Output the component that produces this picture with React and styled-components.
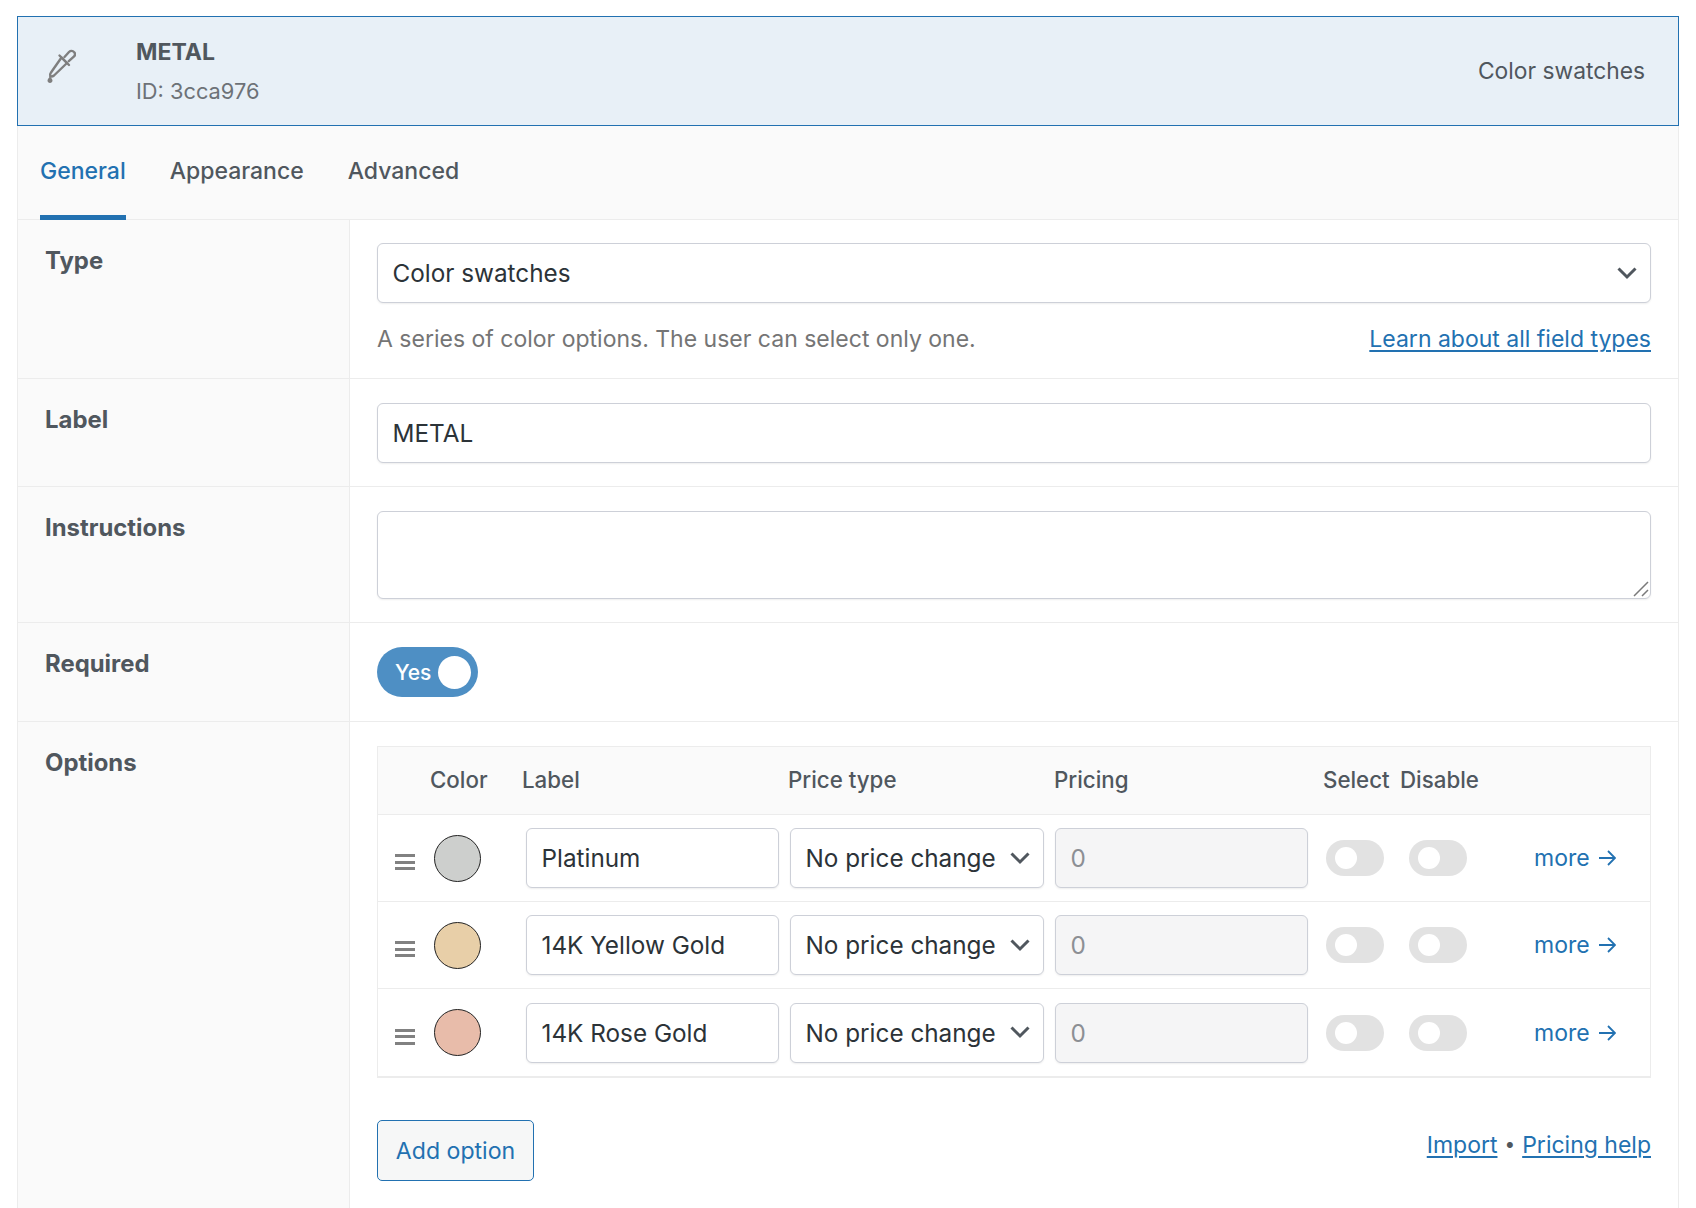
import React from 'react'
import styled, { createGlobalStyle } from 'styled-components'

const GlobalStyle = createGlobalStyle`
    html, body {
        margin: 0;
        padding: 0;
        background: #fff;
    }
    body {
        font-family: Inter, "Liberation Sans", sans-serif;
        font-size: 23px;
        color: #50575e;
    }
    * {
        box-sizing: border-box;
    }
`

const Page = styled.div`
    height: 1208px;
    overflow: hidden;
    padding: 16px 17px 0;
`

const Panel = styled.div`
    width: 1662px;
    height: 1300px;
    border-left: 1px solid #ececec;
    border-right: 1px solid #ececec;
`

const Header = styled.header`
    height: 110px;
    margin: 0 -1px;
    padding: 0 33px 0 26px;
    display: flex;
    align-items: center;
    background: #e8f0f7;
    border: 1px solid #2271b1;
`

const DropperIcon = styled.svg`
    margin-top: -11px;
`

const HeaderTitles = styled.div`
    margin-left: 60px;
    flex: 1;
    display: flex;
    flex-direction: column;
    gap: 14px;
`

const FieldName = styled.div`
    font-weight: 700;
    font-size: 23px;
    line-height: 26px;
    color: #50575e;
`

const FieldId = styled.div`
    font-size: 21.8px;
    line-height: 24px;
    color: #6d7277;
`

const FieldType = styled.div`
    font-size: 22.8px;
    line-height: 28px;
    color: #50575e;
`

const Tabs = styled.nav`
    height: 94px;
    padding-left: 22px;
    display: flex;
    gap: 44px;
    background: #fafafa;
    border-bottom: 1px solid #ececec;
`

const Tab = styled.a`
    height: 94px;
    padding-top: 31px;
    font-size: 23px;
    line-height: 28px;
    color: ${(p) => (p.$active ? '#2271b1' : '#50575e')};
    border-bottom: 5px solid ${(p) => (p.$active ? '#2271b1' : 'transparent')};
    font-weight: 500;
`

const Row = styled.section`
    display: flex;
    border-bottom: 1px solid #ececec;
`

const RowLabel = styled.div`
    width: 332px;
    flex: none;
    padding: 27px 0 0 27px;
    font-size: 23.9px;
    font-weight: 700;
    line-height: 28px;
    background: #fafafa;
    border-right: 1px solid #ececec;
`

const RowBody = styled.div`
    flex: 1;
    padding: ${(p) => p.$top || 24}px 27px 23px;
`

const Control = `
    border: 1px solid #cdd0d8;
    border-radius: 6px;
    box-shadow: 0 1px 2px rgba(0, 0, 0, 0.07);
    background: #fff;
    color: #2c3338;
    font-family: inherit;
    font-size: 24.3px;
`

const SelectBox = styled.div`
    ${Control}
    height: 60px;
    padding: 0 13px 0 14.5px;
    display: flex;
    align-items: center;
    justify-content: space-between;
`

const TextInput = styled.input`
    ${Control}
    display: block;
    width: 100%;
    height: 60px;
    padding: 0 14.5px;
    outline: none;
    &:disabled {
        background: #f5f5f6;
        color: #8c8f94;
        -webkit-text-fill-color: #8c8f94;
        opacity: 1;
    }
`

const AreaWrap = styled.div`
    position: relative;
`

const TextArea = styled.textarea`
    ${Control}
    display: block;
    width: 100%;
    height: 88px;
    padding: 10px 15px;
    outline: none;
    resize: none;
`

const Grip = styled.svg`
    position: absolute;
    right: 2px;
    bottom: 2px;
    pointer-events: none;
`

const HelpLine = styled.div`
    margin-top: 22px;
    margin-bottom: 2px;
    display: flex;
    justify-content: space-between;
    line-height: 28px;
    color: #757575;
`

const Link = styled.a`
    color: #2271b1;
    text-decoration: underline;
    text-decoration-thickness: 2px;
    text-underline-offset: 3px;
`

const Switch = styled.div`
    width: 101px;
    height: 50px;
    margin-bottom: 1px;
    padding: 0 7px 0 18px;
    display: flex;
    align-items: center;
    justify-content: space-between;
    border-radius: 25px;
    background: #4e8fc4;
    color: #fff;
    font-size: 21px;
    font-weight: 500;
`

const Knob = styled.span`
    width: 33px;
    height: 33px;
    border-radius: 50%;
    background: #fff;
`

const Table = styled.div`
    border: 1px solid #ececec;
    border-bottom-width: 2px;
`

const TableHead = styled.div`
    height: 68px;
    padding: 0 0 2px 52px;
    display: grid;
    grid-template-columns: 92px 266px 266px 269px 77px auto;
    align-items: center;
    background: #fafafa;
    border-bottom: 1px solid #ececec;
    font-size: 22.3px;
    font-weight: 500;
`

const OptionRow = styled.div`
    height: 87px;
    padding-left: 17px;
    display: grid;
    grid-template-columns: 39px 92px 264px 265px 271px 83px 125px auto;
    align-items: center;
    border-bottom: 1px solid #ececec;
    &:last-child {
        border-bottom: 0;
    }
`

const DragHandle = styled.span`
    width: 20px;
    height: 16px;
    margin-top: 8px;
    border-top: 3px solid #818181;
    border-bottom: 3px solid #818181;
    position: relative;
    &::after {
        content: '';
        position: absolute;
        left: 0;
        right: 0;
        top: 3.5px;
        height: 3px;
        background: #818181;
    }
`

const Swatch = styled.span`
    width: 47px;
    height: 47px;
    border-radius: 50%;
    border: 1px solid #222;
    background: ${(p) => p.$color};
`

const Cell = styled.div`
    width: ${(p) => p.$width}px;
`

const MiniSwitch = styled.span`
    width: ${(p) => p.$width}px;
    height: 36px;
    padding-left: 9px;
    display: flex;
    align-items: center;
    border-radius: 18px;
    background: #e2e2e2;
    &::before {
        content: '';
        width: 22px;
        height: 22px;
        border-radius: 50%;
        background: #fff;
    }
`

const MoreLink = styled.a`
    display: flex;
    align-items: center;
    gap: 9px;
    color: #2271b1;
    font-size: 23px;
`

const Actions = styled.div`
    margin-top: 42px;
    margin-bottom: 60px;
    display: flex;
    justify-content: space-between;
`

const AddButton = styled.button`
    width: 157px;
    height: 61px;
    padding: 0;
    border: 1px solid #2271b1;
    border-radius: 5px;
    background: #f6f7f7;
    color: #2271b1;
    font-family: inherit;
    font-size: 23.1px;
`

const ActionLinks = styled.div`
    margin-top: 10px;
    display: flex;
    gap: 7px;
    line-height: 30px;
`

const Bullet = styled.span`
    font-size: 19px;
`

const Chevron = () => (
    <svg width="20" height="13" viewBox="0 0 20 13" fill="none">
        <path d="M1.500 1.500l8.500 8.500 8.500-8.500" stroke="#50575e" strokeWidth="3" />
    </svg>
)

const Dropper = () => (
    <DropperIcon width="32" height="36" viewBox="44 48 32 36" fill="none" stroke="#7f7f7f" strokeWidth="2.4" strokeLinejoin="round" strokeLinecap="round">
        <path d="M61.500 57.500l5.500 5.500-13 12.500c-1 .9-2.400 1.200-3.700 1-.5-1.400-.2-2.900.7-4z" />
        <path d="M59.500 55.500l9.500 9.500" />
        <path d="M64.500 57l4.500-5c1.600-1.600 3.800-1.400 5 0 1.200 1.300 1.200 3.300-.2 4.600l-5 4.600" />
        <path d="M50 76.500c-1.500 1.800-2.500 3-2.500 4 0 1.400 1.100 2.400 2.500 2.400s2.500-1 2.500-2.400c0-1-1-2.200-2.500-4z" fill="#7f7f7f" stroke="none" />
    </DropperIcon>
)

const Arrow = () => (
    <svg width="17" height="16" viewBox="0 0 17 16" fill="none" stroke="#2271b1" strokeWidth="1.8">
        <path d="M0 8h16M9 1l7 7-7 7" />
    </svg>
)

const options = [
    { name: 'Platinum', color: '#cdcfcd' },
    { name: '14K Yellow Gold', color: '#e8cfa8' },
    { name: '14K Rose Gold', color: '#e8bcaa' },
]

const App = () => {
    return (
        <>
            <GlobalStyle />
            <Page>
                <Panel>
                    <Header>
                        <Dropper />
                        <HeaderTitles>
                            <FieldName>METAL</FieldName>
                            <FieldId>ID: 3cca976</FieldId>
                        </HeaderTitles>
                        <FieldType>Color swatches</FieldType>
                    </Header>
                    <Tabs>
                        <Tab $active>General</Tab>
                        <Tab>Appearance</Tab>
                        <Tab>Advanced</Tab>
                    </Tabs>
                    <Row>
                        <RowLabel>Type</RowLabel>
                        <RowBody $top={23}>
                            <SelectBox>
                                Color swatches
                                <Chevron />
                            </SelectBox>
                            <HelpLine>
                                <span>A series of color options. The user can select only one.</span>
                                <Link>Learn about all field types</Link>
                            </HelpLine>
                        </RowBody>
                    </Row>
                    <Row>
                        <RowLabel>Label</RowLabel>
                        <RowBody>
                            <TextInput defaultValue="METAL" />
                        </RowBody>
                    </Row>
                    <Row>
                        <RowLabel>Instructions</RowLabel>
                        <RowBody>
                            <AreaWrap>
                                <TextArea />
                                <Grip width="16" height="16" viewBox="0 0 16 16" stroke="#7a7a7a" strokeWidth="1.5">
                                    <path d="M1 15L15 1M9 15l6-6" />
                                </Grip>
                            </AreaWrap>
                        </RowBody>
                    </Row>
                    <Row>
                        <RowLabel>Required</RowLabel>
                        <RowBody>
                            <Switch>
                                Yes
                                <Knob />
                            </Switch>
                        </RowBody>
                    </Row>
                    <Row>
                        <RowLabel>Options</RowLabel>
                        <RowBody>
                            <Table>
                                <TableHead>
                                    <span>Color</span>
                                    <span>Label</span>
                                    <span>Price type</span>
                                    <span>Pricing</span>
                                    <span>Select</span>
                                    <span>Disable</span>
                                </TableHead>
                                {options.map((option) => (
                                    <OptionRow key={option.name}>
                                        <DragHandle />
                                        <Swatch $color={option.color} />
                                        <Cell $width={253}>
                                            <TextInput defaultValue={option.name} />
                                        </Cell>
                                        <Cell $width={254}>
                                            <SelectBox>
                                                No price change
                                                <Chevron />
                                            </SelectBox>
                                        </Cell>
                                        <Cell $width={253}>
                                            <TextInput disabled defaultValue="0" />
                                        </Cell>
                                        <MiniSwitch $width={58} />
                                        <MiniSwitch $width={58} />
                                        <MoreLink>
                                            more
                                            <Arrow />
                                        </MoreLink>
                                    </OptionRow>
                                ))}
                            </Table>
                            <Actions>
                                <AddButton>Add option</AddButton>
                                <ActionLinks>
                                    <Link>Import</Link>
                                    <Bullet>•</Bullet>
                                    <Link>Pricing help</Link>
                                </ActionLinks>
                            </Actions>
                        </RowBody>
                    </Row>
                </Panel>
            </Page>
        </>
    )
}

export default App
